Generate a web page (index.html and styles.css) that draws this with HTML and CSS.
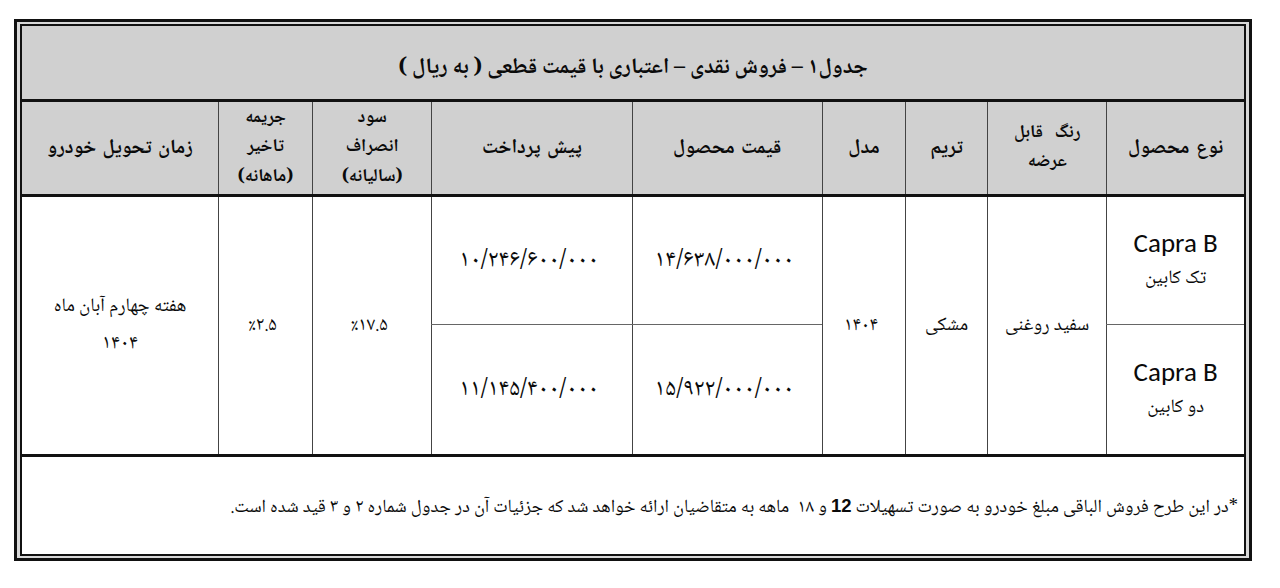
FILE: index.html
```html
<!DOCTYPE html>
<html lang="fa" dir="rtl">
<head>
<meta charset="utf-8">
<title>جدول ۱</title>
<link rel="stylesheet" href="styles.css">
</head>
<body>
<div class="frame">
  <table class="grid">
    <colgroup>
      <col class="c1"><col class="c2"><col class="c3"><col class="c4"><col class="c5"><col class="c6"><col class="c7"><col class="c8"><col class="c9">
    </colgroup>
    <tr class="title-row">
      <td colspan="9" class="title">جدول۱ – فروش نقدی – اعتباری با قیمت قطعی ( به ریال )</td>
    </tr>
    <tr class="head-row">
      <th class="one">نوع محصول</th>
      <th>رنگ&nbsp; قابل<br>عرضه</th>
      <th class="one">تریم</th>
      <th class="one">مدل</th>
      <th class="one">قیمت محصول</th>
      <th class="one">پیش پرداخت</th>
      <th>سود<br>انصراف<br>(سالیانه)</th>
      <th>جریمه<br>تاخیر<br>(ماهانه)</th>
      <th class="one">زمان تحویل خودرو</th>
    </tr>
    <tr class="row1">
      <td class="product"><span class="latin">Capra B</span><span class="sub">تک کابین</span></td>
      <td rowspan="2">سفید روغنی</td>
      <td rowspan="2">مشکی</td>
      <td rowspan="2" class="num">۱۴۰۴</td>
      <td class="num big split">۱۴/۶۳۸/۰۰۰/۰۰۰</td>
      <td class="num big split">۱۰/۲۴۶/۶۰۰/۰۰۰</td>
      <td rowspan="2" class="num"><span class="ltr">٪۱۷.۵</span></td>
      <td rowspan="2" class="num"><span class="ltr">٪۲.۵</span></td>
      <td rowspan="2" class="delivery">هفته چهارم آبان ماه<br><span class="digits">۱۴۰۴</span></td>
    </tr>
    <tr class="row2">
      <td class="product"><span class="latin">Capra B</span><span class="sub">دو کابین</span></td>
      <td class="num big">۱۵/۹۲۲/۰۰۰/۰۰۰</td>
      <td class="num big">۱۱/۱۴۵/۴۰۰/۰۰۰</td>
    </tr>
    <tr class="foot-row">
      <td colspan="9" class="note">*در این طرح فروش الباقی مبلغ خودرو به صورت تسهیلات <b class="latin-b">12</b> و ۱۸&nbsp; ماهه به متقاضیان ارائه خواهد شد که جزئیات آن در جدول شماره ۲ و ۳ قید شده است.</td>
    </tr>
  </table>
</div>
</body>
</html>
```
FILE: styles.css
```css
html, body {
  margin: 0;
  padding: 0;
  background: #ffffff;
}
body {
  font-family: "Noto Naskh Arabic", "Noto Sans Arabic", "DejaVu Sans", sans-serif;
  color: #0a0a0a;
}
.frame {
  box-sizing: border-box;
  margin: 19px 28px 0 14px;
  border: 3px solid #111;
  padding: 2px 3px 2px 3px;
  background: #d8d8d8;
}
.grid {
  width: 100%;
  border-collapse: collapse;
  border: 2px solid #111;
  table-layout: fixed;
  background: #fff;
}
.c1 { width: 138px; }
.c2 { width: 119px; }
.c3 { width: 82px; }
.c4 { width: 83px; }
.c5 { width: 190px; }
.c6 { width: 200px; }
.c7 { width: 119px; }
.c8 { width: 94px; }
.c9 { width: 197px; }

.grid td, .grid th {
  padding: 0;
  text-align: center;
  vertical-align: middle;
  border-left: 1px solid #444;
  border-right: 1px solid #444;
}
.title-row td {
  height: 63px;
  padding-top: 10px;
  background: #d0d0d0;
  font-size: 22px;
  font-weight: bold;
  border-bottom: 3px solid #111;
}
.head-row th {
  height: 89px;
  padding-top: 0;
  background: #d0d0d0;
  font-size: 18px;
  word-spacing: 2px;
  font-weight: bold;
  line-height: 29.5px;
  border-bottom: 3px solid #111;
}
.head-row th.one {
  font-size: 20px;
  padding-top: 3px;
}
.row1 td {
  height: 127px;
  font-size: 19px;
}
.row2 td {
  height: 129px;
  font-size: 19px;
}
.split {
  border-bottom: 1px solid #666;
}
.row1 .product {
  border-bottom: 1px solid #666;
}
.product {
  line-height: 36px;
}
.latin {
  display: block;
  font-family: "Carlito", "Lato", "Liberation Sans", sans-serif;
  font-size: 27px;
  direction: ltr;
}
.sub {
  display: block;
  font-size: 19px;
}
.num {
  font-size: 20px;
  letter-spacing: 6px;
  text-indent: 6px;
}
.num.big {
  font-size: 24px;
}
.digits {
  font-size: 20px;
  letter-spacing: 5px;
}
.ltr {
  direction: ltr;
  unicode-bidi: isolate;
}
.delivery {
  font-size: 20px;
  line-height: 37px;
}
.foot-row td {
  height: 93px;
  padding-top: 4px;
  border-top: 3px solid #111;
  text-align: right;
  padding-right: 6px;
  font-size: 18.5px;
}
.latin-b {
  font-family: "Liberation Sans", sans-serif;
  font-weight: bold;
}
```
